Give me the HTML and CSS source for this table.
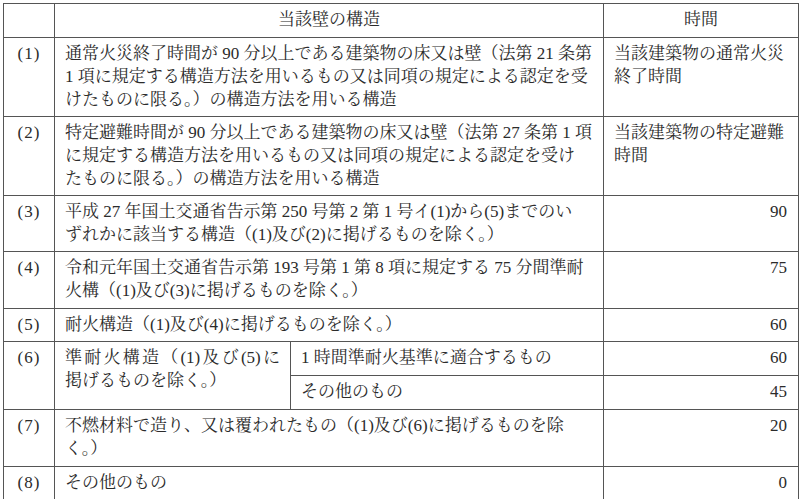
FILE: index.html
```html
<!DOCTYPE html>
<html lang="ja">
<head>
<meta charset="utf-8">
<link rel="stylesheet" href="styles.css">
</head>
<body>
<table class="tbl">
  <colgroup>
    <col class="c-no">
    <col class="c-a">
    <col class="c-b">
    <col class="c-time">
  </colgroup>
  <tr class="h-head">
    <th class="no"></th>
    <th colspan="2" class="head">当該壁の構造</th>
    <th class="head">時間</th>
  </tr>
  <tr class="h-3a">
    <td class="no">(1)</td>
    <td colspan="2" class="txt">通常火災終了時間が 90 分以上である建築物の床又は壁（法第 21 条第<br>1 項に規定する構造方法を用いるもの又は同項の規定による認定を受<br>けたものに限る。）の構造方法を用いる構造</td>
    <td class="txt">当該建築物の通常火災<br>終了時間</td>
  </tr>
  <tr class="h-3b">
    <td class="no">(2)</td>
    <td colspan="2" class="txt">特定避難時間が 90 分以上である建築物の床又は壁（法第 27 条第 1 項<br>に規定する構造方法を用いるもの又は同項の規定による認定を受け<br>たものに限る。）の構造方法を用いる構造</td>
    <td class="txt">当該建築物の特定避難<br>時間</td>
  </tr>
  <tr class="h-2a">
    <td class="no">(3)</td>
    <td colspan="2" class="txt">平成 27 年国土交通省告示第 250 号第 2 第 1 号イ(1)から(5)までのい<br>ずれかに該当する構造（(1)及び(2)に掲げるものを除く。）</td>
    <td class="num">90</td>
  </tr>
  <tr class="h-2b">
    <td class="no">(4)</td>
    <td colspan="2" class="txt">令和元年国土交通省告示第 193 号第 1 第 8 項に規定する 75 分間準耐<br>火構（(1)及び(3)に掲げるものを除く。）</td>
    <td class="num">75</td>
  </tr>
  <tr class="h-1">
    <td class="no">(5)</td>
    <td colspan="2" class="txt">耐火構造（(1)及び(4)に掲げるものを除く。）</td>
    <td class="num">60</td>
  </tr>
  <tr class="h-sub">
    <td class="no" rowspan="2">(6)</td>
    <td class="txt" rowspan="2"><span class="jline">準耐火構造（(1)及び(5)に</span>掲げるものを除く。）</td>
    <td class="txt">1 時間準耐火基準に適合するもの</td>
    <td class="num">60</td>
  </tr>
  <tr class="h-sub">
    <td class="txt">その他のもの</td>
    <td class="num">45</td>
  </tr>
  <tr class="h-2b">
    <td class="no">(7)</td>
    <td colspan="2" class="txt">不燃材料で造り、又は覆われたもの（(1)及び(6)に掲げるものを除<br>く。）</td>
    <td class="num">20</td>
  </tr>
  <tr class="h-1">
    <td class="no">(8)</td>
    <td colspan="2" class="txt">その他のもの</td>
    <td class="num">0</td>
  </tr>
</table>
</body>
</html>
```

FILE: styles.css
```css
html, body {
  margin: 0;
  padding: 0;
  background: #ffffff;
}

body {
  padding: 3px 3px 0 3px;
  font-family: "Liberation Serif", "Noto Serif CJK JP", "Noto Sans CJK JP", serif;
  font-size: 17px;
  color: #2b2b2b;
}

.tbl {
  border-collapse: collapse;
  width: 795px;
  table-layout: fixed;
}

.c-no { width: 51px; }
.c-a { width: 236px; }
.c-b { width: 313px; }
.c-time { width: 195px; }

.tbl th,
.tbl td {
  border: 1px solid #555555;
  padding: 4px 10px 5px 10px;
  line-height: 23px;
  vertical-align: top;
  font-weight: normal;
  white-space: nowrap;
}

.tbl .head {
  text-align: center;
}

.tbl .no {
  text-align: center;
  padding-left: 4px;
  padding-right: 4px;
  letter-spacing: 1px;
}

.tbl .txt {
  text-align: left;
}

.jline {
  display: block;
  text-align: justify;
  text-align-last: justify;
  text-justify: inter-character;
}

.tbl .num {
  text-align: right;
  padding-right: 11px;
}

.h-head { height: 34px; }
.h-3a { height: 78px; }
.h-3b { height: 77px; }
.h-2a { height: 56px; }
.h-2b { height: 57px; }
.h-1 { height: 33px; }
.h-sub { height: 34px; }
```
